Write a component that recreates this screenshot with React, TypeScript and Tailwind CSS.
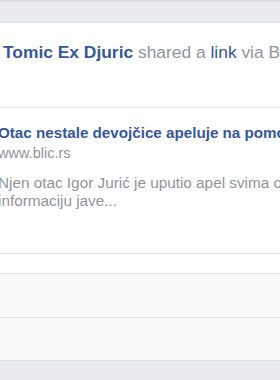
// Shared-link story card, cropped view

const blue = 'text-[#365899]'
const gray = 'text-[#90949c]'

export default function App() {
  return (
    <div className="w-[280px] h-[380px] overflow-hidden bg-[#e9ebee] border-t-2 border-[#dddfe2] font-['Liberation_Sans',Arial,sans-serif]">
      <div className="mt-[20px] bg-white border-t border-[#dddfe2]">
        {/* Story header */}
        <div className="h-[84px] pt-[19px] pl-[3px] whitespace-nowrap overflow-hidden text-[17.4px] leading-[20px]">
          <span className={`font-bold ${blue}`}>Tomic Ex Djuric</span>
          <span className={gray}> shared a </span>
          <span className={blue}>link</span>
          <span className={gray}> via Blic</span>
        </div>

        {/* Link preview */}
        <div className="border-t border-[#e5e5e5] h-[146px] pt-[15px] overflow-hidden">
          <div className="-ml-[2px] whitespace-nowrap">
            <div className={`text-[15.2px] leading-[20px] font-bold ${blue}`}>
              Otac nestale devojčice apeluje na pomoć
            </div>
            <div className={`text-[14.5px] leading-[20px] ${gray}`}>www.blic.rs</div>
            <div className={`mt-[11px] text-[15.3px] leading-[18px] ${gray}`}>
              <div>Njen otac Igor Jurić je uputio apel svima o</div>
              <div>informaciju jave...</div>
            </div>
          </div>
        </div>

        {/* Footer rows */}
        <div className="h-[20px] border-t border-[#e1e2e3] bg-white" />
        <div className="h-[44px] border-t border-[#e1e2e3] bg-[#fafafa]" />
        <div className="h-[43px] border-t border-[#e1e2e3] bg-[#fafafa]" />
        <div className="border-t border-[#dddfe2]" />
      </div>
    </div>
  )
}
